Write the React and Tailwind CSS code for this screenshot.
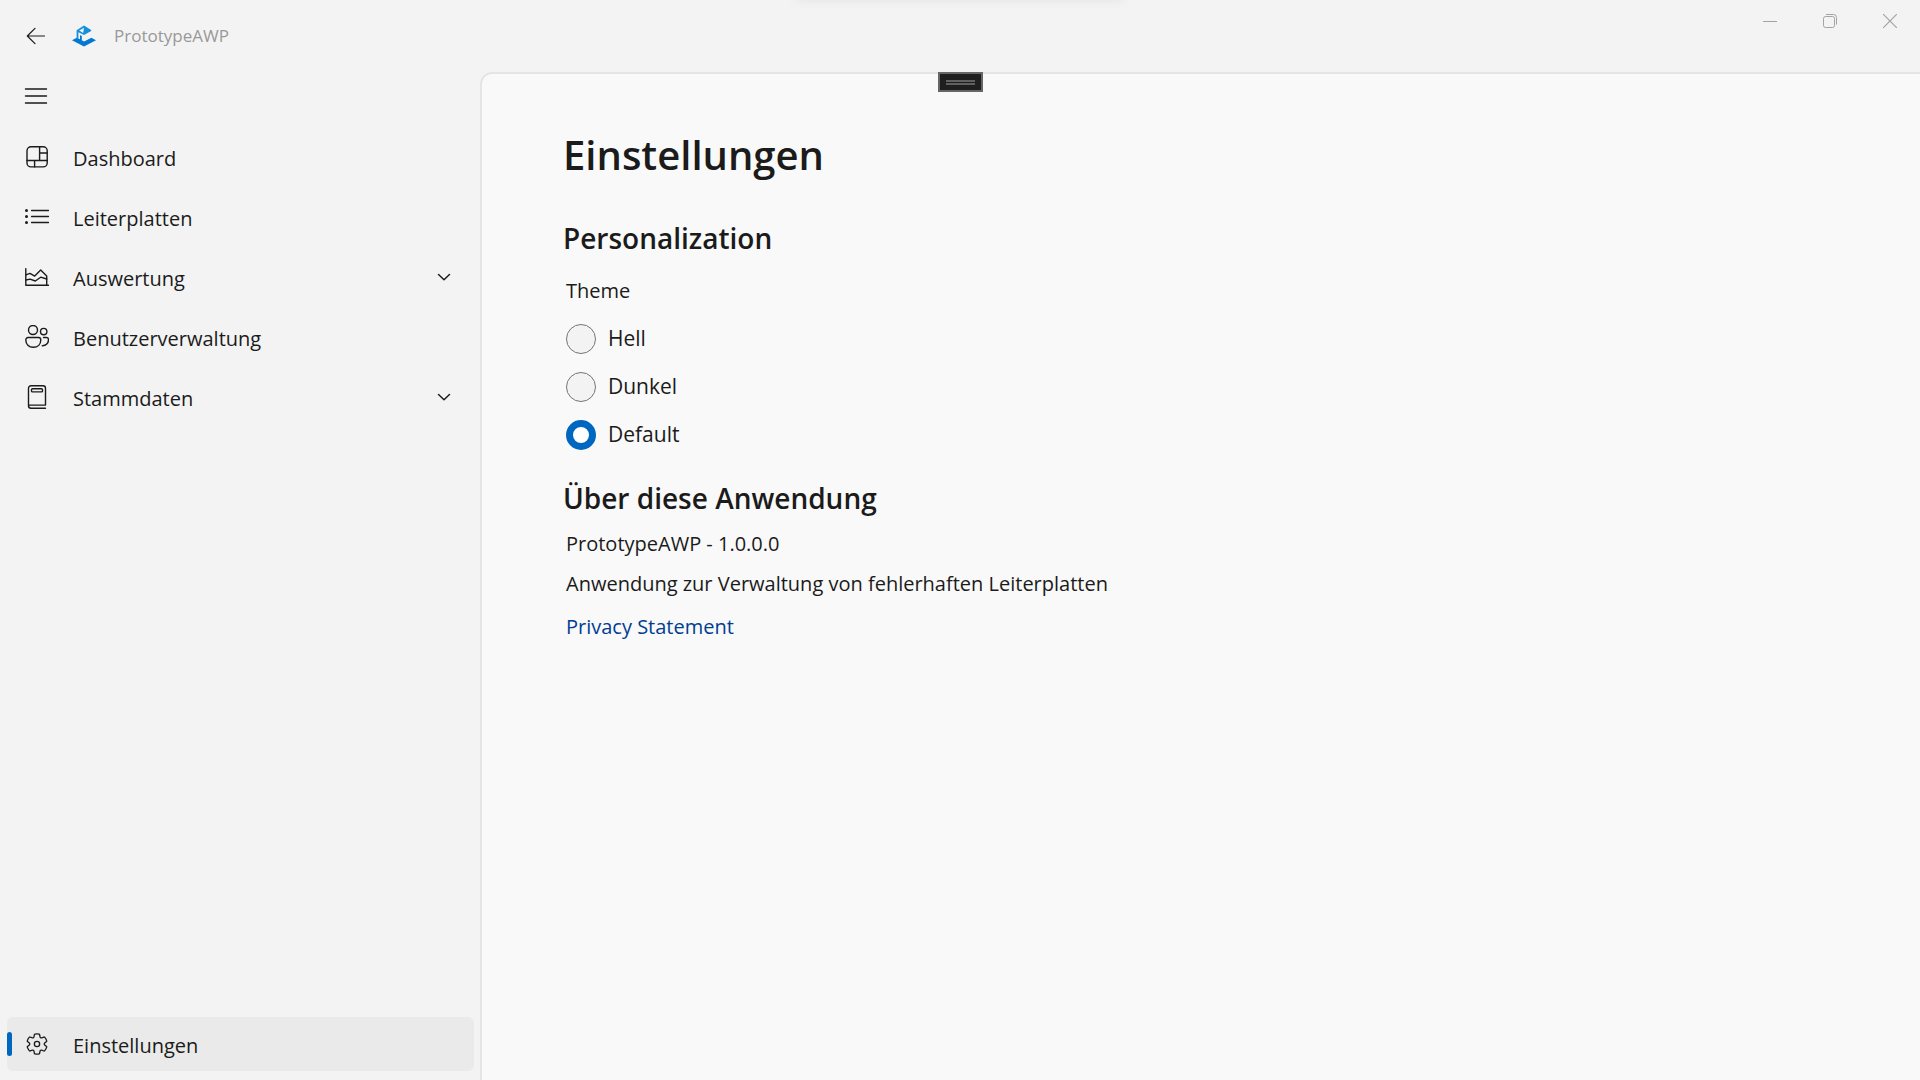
import { useState } from "react";

const iconProps = {
  width: 24,
  height: 24,
  viewBox: "0 0 24 24",
  fill: "none",
  stroke: "currentColor",
  strokeWidth: 1.4,
  strokeLinecap: "round",
  strokeLinejoin: "round",
  "aria-hidden": true,
  className: "shrink-0",
};

function DashboardIcon() {
  return (
    <svg {...iconProps}>
      <rect x="2" y="1.7" width="20.2" height="20.2" rx="4" />
      <path d="M14.6 1.7v13.8M2 15.5h20.2M14.6 8h7.6M9.6 15.5v6.4" />
    </svg>
  );
}

function ListIcon() {
  return (
    <svg {...iconProps}>
      <g fill="currentColor" stroke="none">
        <circle cx="1.5" cy="5.5" r="1.5" />
        <circle cx="1.5" cy="11.5" r="1.5" />
        <circle cx="1.5" cy="17.5" r="1.5" />
      </g>
      <path d="M6.6 5.5h17M6.6 11.5h17M6.6 17.5h17" />
    </svg>
  );
}

function ChartIcon() {
  return (
    <svg {...iconProps}>
      <path d="M.8 3.6v16.6h22.6" />
      <path d="M.9 9.8 5 8.4l4.7 2.7 6-6 6 5.800v9.200" />
      <path d="M.9 15 5 14.100l5.300 1.900 5.400-3.800 6 1.800" />
    </svg>
  );
}

function PeopleIcon() {
  return (
    <svg {...iconProps}>
      <circle cx="8" cy="5" r="4.5" />
      <circle cx="18.7" cy="6.6" r="3.2" />
      <path d="M3 12.5h10.6a2.2 2.2 0 0 1 2.2 2.2c0 4.5-3 7.6-7.5 7.6S.8 19.2 .8 14.7A2.2 2.2 0 0 1 3 12.5Z" />
      <path d="M18.5 12.5h2.9a2.1 2.1 0 0 1 2.1 2.1c0 3.6-2.5 6.2-6.2 6.1" />
    </svg>
  );
}

function BookIcon() {
  return (
    <svg {...iconProps}>
      <path d="M20.5 23.2H6a2.5 2.5 0 0 1-2.5-2.5V3.2A2.5 2.5 0 0 1 6 .7h12a2.5 2.5 0 0 1 2.5 2.5v16.900h-17" />
      <rect x="6.5" y="3.7" width="11" height="3.2" rx="1" />
    </svg>
  );
}

function GearIcon() {
  return (
    <svg {...iconProps} viewBox="0 0 20 20" strokeWidth="1.1">
      <path d="M1.91 7.38A8.5 8.5 0 0 1 3.69 4.3a.5.5 0 0 1 .54-.13l1.92.68a1 1 0 0 0 1.32-.76l.36-2a.5.5 0 0 1 .4-.4 8.53 8.53 0 0 1 3.55 0c.2.04.35.2.38.4l.37 2a1 1 0 0 0 1.32.76l1.92-.68a.5.5 0 0 1 .54.13 8.5 8.5 0 0 1 1.78 3.08c.06.2 0 .4-.15.54l-1.56 1.32a1 1 0 0 0 0 1.52l1.56 1.32a.5.5 0 0 1 .15.54 8.5 8.5 0 0 1-1.78 3.08.5.5 0 0 1-.54.13l-1.92-.68a1 1 0 0 0-1.32.76l-.37 2a.5.5 0 0 1-.38.4 8.53 8.53 0 0 1-3.56 0 .5.5 0 0 1-.39-.4l-.36-2a1 1 0 0 0-1.32-.76l-1.92.68a.5.5 0 0 1-.54-.13 8.5 8.5 0 0 1-1.78-3.08.5.5 0 0 1 .15-.54l1.56-1.32a1 1 0 0 0 0-1.52L2.06 7.92a.5.5 0 0 1-.15-.54Z" />
      <circle cx="10" cy="10" r="2.2" />
    </svg>
  );
}

function BackIcon() {
  return (
    <svg {...iconProps} strokeWidth="1.2">
      <path d="M20.5 12H3.5M11 4.3 3.3 12l7.7 7.7" />
    </svg>
  );
}

function MenuIcon() {
  return (
    <svg {...iconProps}>
      <path d="M1.5 5h21M1.5 12h21M1.5 19h21" />
    </svg>
  );
}

function Logo() {
  return (
    <svg width="24" height="24" viewBox="0 0 24 24" aria-hidden="true" className="shrink-0">
      <path fill="#0078d4" d="M0 16.3 4.8 13.7 8 15.2V11l1.800 1v4.200l2.300 1.200 7.300-3.700 4.600 2.600L12 22.500Z" />
      <path fill="#1490df" fillRule="evenodd" d="M12 1.500 19.200 6v1L12 11 6.400 8.300v6.400L4.600 13.700V6.200Zm0 2.200L7.200 6.500 11.200 9Z" />
    </svg>
  );
}

function Chevron() {
  return (
    <svg width="14" height="14" viewBox="0 0 14 14" fill="none" stroke="currentColor" strokeWidth="1.5" strokeLinecap="round" strokeLinejoin="round" aria-hidden="true">
      <path d="m1.500 4.500 5.500 5.200 5.500-5.200" />
    </svg>
  );
}

const navItems = [
  { label: "Dashboard", Icon: DashboardIcon },
  { label: "Leiterplatten", Icon: ListIcon },
  { label: "Auswertung", Icon: ChartIcon, expandable: true },
  { label: "Benutzerverwaltung", Icon: PeopleIcon },
  { label: "Stammdaten", Icon: BookIcon, expandable: true },
];

function NavItem({ label, Icon, expandable, selected }) {
  return (
    <button
      type="button"
      aria-current={selected ? "page" : undefined}
      aria-expanded={expandable ? false : undefined}
      className={
        "relative flex h-[54px] w-full items-center rounded-md pr-[23px] pl-[18px] text-left " +
        (selected ? "bg-[#eaeaea]" : "hover:bg-[#eaeaea]")
      }
    >
      {selected && <span className="absolute inset-y-[15px] left-0 w-[5px] rounded-full bg-[#0067c0]" />}
      <Icon />
      <span className="grow pt-1 pl-6 text-xl">{label}</span>
      {expandable && <Chevron />}
    </button>
  );
}

function TitleBar() {
  return (
    <header className="relative flex h-[72px] items-center pl-6">
      <button type="button" aria-label="Zurück">
        <BackIcon />
      </button>
      <div className="flex items-center gap-[18px] pl-6 text-[17px] text-[#999]">
        <Logo />
        <span>PrototypeAWP</span>
      </div>
      <div className="absolute -top-5 left-1/2 h-5 w-[330px] -translate-x-1/2 shadow-[0_0_12px_#00000012]" />
      <div className="ml-auto flex self-start text-[#a3a3a3]">
        <button type="button" aria-label="Minimieren" className="flex h-[42px] w-[60px] items-center justify-center">
          <svg width="14" height="14" viewBox="0 0 14 14" stroke="currentColor" aria-hidden="true">
            <path d="M0 7.500h14" />
          </svg>
        </button>
        <button type="button" aria-label="Verkleinern" className="flex h-[42px] w-[60px] items-center justify-center">
          <svg width="14" height="14" viewBox="0 0 14 14" fill="none" stroke="currentColor" aria-hidden="true">
            <rect x=".5" y="2.5" width="11" height="11" rx="2" />
            <path d="M3 .5h7.500a3 3 0 0 1 3 3V10.500" />
          </svg>
        </button>
        <button type="button" aria-label="Schließen" className="flex h-[42px] w-[60px] items-center justify-center">
          <svg width="14" height="14" viewBox="0 0 14 14" stroke="currentColor" strokeWidth="1.2" aria-hidden="true">
            <path d="m0 0 14 14M14 0 0 14" />
          </svg>
        </button>
      </div>
    </header>
  );
}

export default function App() {
  const [theme, setTheme] = useState("Default");

  return (
    <div className="flex min-h-screen flex-col overflow-hidden bg-[#f3f3f3] font-['Open_Sans','Noto_Sans',sans-serif] text-[#1b1b1b]">
      <TitleBar />
      <div className="flex grow">
        <nav className="flex w-[480px] shrink-0 flex-col pr-1.5 pb-[9px] pl-[7px]">
          <button type="button" aria-label="Navigation" className="mb-[10px] flex h-12 items-center pl-[17px]">
            <MenuIcon />
          </button>
          <div className="flex flex-col gap-1.5">
            {navItems.map((item) => (
              <NavItem key={item.label} {...item} />
            ))}
          </div>
          <div className="mt-auto">
            <NavItem label="Einstellungen" Icon={GearIcon} selected />
          </div>
        </nav>
        <main className="grow rounded-tl-xl border-t-2 border-l-2 border-[#e5e5e5] bg-[#f9f9f9] pt-[54px] pl-[81px]">
          <h1 className="text-[40px] leading-[54px] font-semibold">Einstellungen</h1>
          <h2 className="mt-9 text-[28px] leading-10 font-semibold">Personalization</h2>
          <fieldset className="mt-[19px] pl-[3px]">
            <legend className="text-xl leading-7">Theme</legend>
            <div className="mt-2.5 flex flex-col">
              {["Hell", "Dunkel", "Default"].map((name) => (
                <label key={name} className="flex h-12 items-center gap-3 text-[21px]">
                  <input
                    type="radio"
                    name="theme"
                    value={name}
                    checked={theme === name}
                    onChange={() => setTheme(name)}
                    className="size-[30px] appearance-none rounded-full border border-[#757575] bg-[#f3f3f3] checked:border-[7px] checked:border-[#0067c0] checked:bg-white"
                  />
                  {name}
                </label>
              ))}
            </div>
          </fieldset>
          <h2 className="mt-[19px] text-[28px] leading-10 font-semibold">Über diese Anwendung</h2>
          <div className="mt-3 flex flex-col items-start gap-3 pl-[3px] text-xl leading-7">
            <p>PrototypeAWP - 1.0.0.0</p>
            <p>Anwendung zur Verwaltung von fehlerhaften Leiterplatten</p>
            <a href="#privacy" className="pt-[3px] text-[#003e92]">
              Privacy Statement
            </a>
          </div>
        </main>
      </div>
      <div className="absolute top-[72px] left-1/2 -ml-[22px] flex h-5 w-[45px] flex-col justify-center gap-px border-2 border-[#666] bg-[#1f1f1f] px-1.5">
        <span className="h-0.5 bg-[#606060]" />
        <span className="h-0.5 bg-[#606060]" />
      </div>
    </div>
  );
}
